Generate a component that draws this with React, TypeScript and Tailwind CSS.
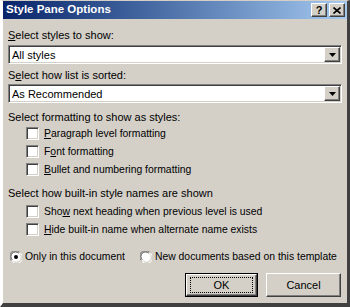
import type { ReactNode } from "react";

function Raised({ children, className = "" }: { children?: ReactNode; className?: string }) {
  return (
    <div
      className={`border border-t-white border-l-white border-b-[#404040] border-r-[#404040] bg-[#d4d0c8] shadow-[inset_-1px_-1px_0_#808080,inset_1px_1px_0_#d4d0c8] ${className}`}
    >
      {children}
    </div>
  );
}

function Combo({ value }: { value: string }) {
  return (
    <div className="flex h-[19px] w-[334px] border border-t-[#808080] border-l-[#808080] border-b-white border-r-white bg-white shadow-[inset_1px_1px_0_#404040,inset_-1px_-1px_0_#d4d0c8]">
      <div className="flex flex-1 items-center pl-[3px] pt-[1px] leading-[13px]">{value}</div>
      <div className="py-[1px] pr-[1px]">
        <Raised className="flex h-[15px] w-[16px] items-center justify-center">
          <svg width="7" height="4" viewBox="0 0 7 4">
            <path d="M0 0h7L3.5 4z" fill="#000" />
          </svg>
        </Raised>
      </div>
    </div>
  );
}

function Check({ label, mt }: { label: ReactNode; mt: string }) {
  return (
    <div className={`flex h-[13px] items-center gap-[5px] pl-[18px] ${mt}`}>
      <div className="h-[13px] w-[13px] shrink-0 border border-t-[#808080] border-l-[#808080] border-b-white border-r-white bg-white shadow-[inset_1px_1px_0_#404040,inset_-1px_-1px_0_#d4d0c8]" />
      <span className="whitespace-nowrap text-[10.4px] leading-[13px]">{label}</span>
    </div>
  );
}

function Radio({ checked }: { checked?: boolean }) {
  return (
    <svg width="12" height="12" viewBox="0 0 12 12" className="shrink-0">
      <circle cx="6" cy="6" r="5.5" fill="#fff" />
      <path d="M1.2 9.5A5.5 5.5 0 0 1 9.5 1.2" stroke="#808080" fill="none" />
      <path d="M2.2 8.8A4.5 4.5 0 0 1 8.8 2.2" stroke="#404040" fill="none" />
      <path d="M10.8 2.5A5.5 5.5 0 0 1 2.5 10.8" stroke="#fff" fill="none" />
      <path d="M9.8 3.2A4.5 4.5 0 0 1 3.2 9.8" stroke="#d4d0c8" fill="none" />
      {checked && <circle cx="6" cy="6" r="2" fill="#000" />}
    </svg>
  );
}

export default function App() {
  return (
    <div className="h-[307px] w-[350px] bg-[#d4d0c8] font-['Liberation_Sans',Arial,sans-serif] text-[11px] text-black">
      <div className="flex h-full flex-col border-x-[3px] border-t-[1px] border-b-[4px] border-t-[#d4d0c8] border-l-white border-r-[#404040] border-b-[#404040]">
        <div className="flex h-[18px] items-center bg-gradient-to-r from-[#0a246a] to-[#a6caf0] pl-[3px] pr-[2px]">
          <span className="flex-1 text-[11.5px] font-bold text-white">Style Pane Options</span>
          <Raised className="flex h-[14px] w-[16px] items-center justify-center text-[11px] font-bold leading-none">
            ?
          </Raised>
          <Raised className="ml-[2px] flex h-[14px] w-[16px] items-center justify-center">
            <svg width="8" height="7" viewBox="0 0 8 7">
              <path d="M0.5 0.5l7 6M7.5 0.5l-7 6" stroke="#000" strokeWidth="1.6" />
            </svg>
          </Raised>
        </div>

        <div className="flex flex-col px-[5px]">
          <div className="mt-[10px] leading-[13px]">
            <u>S</u>elect styles to show:
          </div>
          <div className="mt-[3px]">
            <Combo value="All styles" />
          </div>
          <div className="mt-[5px] leading-[13px]">
            S<u>e</u>lect how list is sorted:
          </div>
          <div className="mt-[2px]">
            <Combo value="As Recommended" />
          </div>

          <div className="mt-[8px] leading-[13px]">Select formatting to show as styles:</div>
          <Check mt="mt-[3px]" label={<><u>P</u>aragraph level formatting</>} />
          <Check mt="mt-[5px]" label={<>F<u>o</u>nt formatting</>} />
          <Check mt="mt-[5px]" label={<><u>B</u>ullet and numbering formatting</>} />

          <div className="mt-[11px] leading-[13px]">Select how built-in style names are shown</div>
          <Check mt="mt-[5px]" label={<>Sho<u>w</u> next heading when previous level is used</>} />
          <Check mt="mt-[5px]" label={<><u>H</u>ide built-in name when alternate name exists</>} />

          <div className="mt-[14px] flex h-[13px] items-center whitespace-nowrap pl-[2px] text-[10.4px]">
            <Radio checked />
            <span className="ml-[3px] leading-[13px]">Only in this document</span>
            <span className="ml-[15px] flex">
              <Radio />
            </span>
            <span className="ml-[3px] leading-[13px]">New documents based on this template</span>
          </div>

          <div className="mt-[10px] flex justify-end gap-[8px] pr-[1px]">
            <div className="h-[24px] w-[73px] border border-black">
              <Raised className="flex h-full w-full items-center justify-center">
                <span className="flex h-[16px] w-[63px] items-center justify-center border border-dotted border-black leading-none">
                  OK
                </span>
              </Raised>
            </div>
            <Raised className="flex h-[24px] w-[75px] items-center justify-center leading-none">Cancel</Raised>
          </div>
        </div>
      </div>
    </div>
  );
}
